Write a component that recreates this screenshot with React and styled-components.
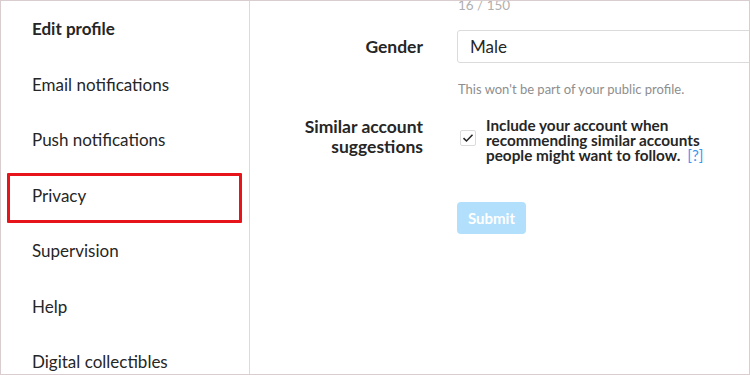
import styled, { createGlobalStyle } from "styled-components";

const GlobalStyle = createGlobalStyle`
    html, body {
        margin: 0;
        padding: 0;
        background: #fff;
    }
    body {
        font-family: "Lato", "Open Sans", sans-serif;
        color: #262626;
    }
`;

const Frame = styled.div`
    width: 750px;
    height: 375px;
    box-sizing: border-box;
    border: 1px solid #d9cdd0;
    display: flex;
    overflow: hidden;
    background: #fff;
`;

const Sidebar = styled.ul`
    list-style: none;
    margin: 0;
    padding: 0;
    width: 248px;
    flex-shrink: 0;
    border-right: 1px solid #dbdbdb;
`;

const NavItem = styled.li`
    position: relative;
    height: 55.5px;
    display: flex;
    align-items: center;
    padding-left: 31px;
    font-size: 17px;
    font-weight: ${(p) => (p.active ? 700 : 400)};
    color: #262626;

    ${(p) =>
        p.highlight &&
        `
        &::after {
            content: "";
            position: absolute;
            left: 6px;
            right: 7px;
            top: 5px;
            bottom: 0;
            border: 3px solid #e8141c;
            border-radius: 1px;
        }
    `}
`;

const Main = styled.main`
    flex: 1;
    overflow: hidden;
`;

const Form = styled.div`
    display: grid;
    grid-template-columns: 173px 320px;
    column-gap: 34px;
    align-items: start;
`;

const Counter = styled.div`
    grid-column: 2;
    font-size: 13.5px;
    color: #b0b0b0;
    line-height: 14px;
    margin-top: -3px;
    padding-left: 1px;
`;

const Label = styled.label`
    grid-column: 1;
    text-align: right;
    font-size: 17.5px;
    font-weight: 700;
    line-height: 20px;
    color: #262626;
    padding-top: ${(p) => p.top || 0}px;
`;

const Field = styled.div`
    grid-column: 2;
    margin-top: ${(p) => p.top || 0}px;
`;

const Select = styled.div`
    height: 33px;
    box-sizing: border-box;
    border: 1px solid #dbdbdb;
    border-radius: 3px;
    display: flex;
    align-items: center;
    padding-left: 12px;
    font-size: 17px;
    background: #fff;
`;

const Helper = styled.div`
    font-size: 13px;
    color: #8e8e8e;
    margin-top: 18px;
    padding-left: 1px;
`;

const CheckRow = styled.div`
    display: flex;
    align-items: flex-start;
    gap: 10px;
    padding-left: 3px;
`;

const Box = styled.span`
    width: 16px;
    height: 16px;
    box-sizing: border-box;
    border: 1px solid #dbdbdb;
    border-radius: 2px;
    flex-shrink: 0;
    margin-top: 12px;
    display: flex;
    align-items: center;
    justify-content: center;
`;

const CheckText = styled.div`
    font-size: 15.3px;
    font-weight: 700;
    line-height: 15px;
    color: #262626;
`;

const Help = styled.a`
    color: #3897f0;
    font-weight: 400;
    margin-left: 7px;
    text-decoration: none;
`;

const Submit = styled.button`
    grid-column: 2;
    justify-self: start;
    margin-top: 39px;
    width: 69px;
    height: 32px;
    border: none;
    border-radius: 4px;
    background: #b2dffc;
    color: #fff;
    font-family: inherit;
    font-size: 15px;
    font-weight: 700;
    padding: 0;
`;

const navItems = [
    "Edit profile",
    "Email notifications",
    "Push notifications",
    "Privacy",
    "Supervision",
    "Help",
    "Digital collectibles",
];

function App() {
    return (
        <>
            <GlobalStyle />
            <Frame>
                <Sidebar>
                    {navItems.map((item, i) => (
                        <NavItem
                            key={item}
                            active={i === 0}
                            highlight={item === "Privacy"}
                        >
                            {item}
                        </NavItem>
                    ))}
                </Sidebar>
                <Main>
                    <Form>
                        <Counter>16 / 150</Counter>
                        <Label top={25}>Gender</Label>
                        <Field top={18}>
                            <Select>Male</Select>
                            <Helper>This won't be part of your public profile.</Helper>
                        </Field>
                        <Label top={20}>
                            Similar account
                            <br />
                            suggestions
                        </Label>
                        <Field top={21}>
                            <CheckRow>
                                <Box>
                                    <svg width="12" height="10" viewBox="0 0 12 10">
                                        <path
                                            d="M1.5 5.2 L4.5 8 L10.5 1.8"
                                            fill="none"
                                            stroke="#262626"
                                            strokeWidth="1.6"
                                        />
                                    </svg>
                                </Box>
                                <CheckText>
                                    Include your account when
                                    <br />
                                    recommending similar accounts
                                    <br />
                                    people might want to follow.
                                    <Help href="#">[?]</Help>
                                </CheckText>
                            </CheckRow>
                        </Field>
                        <Submit>Submit</Submit>
                    </Form>
                </Main>
            </Frame>
        </>
    );
}

export default App;
